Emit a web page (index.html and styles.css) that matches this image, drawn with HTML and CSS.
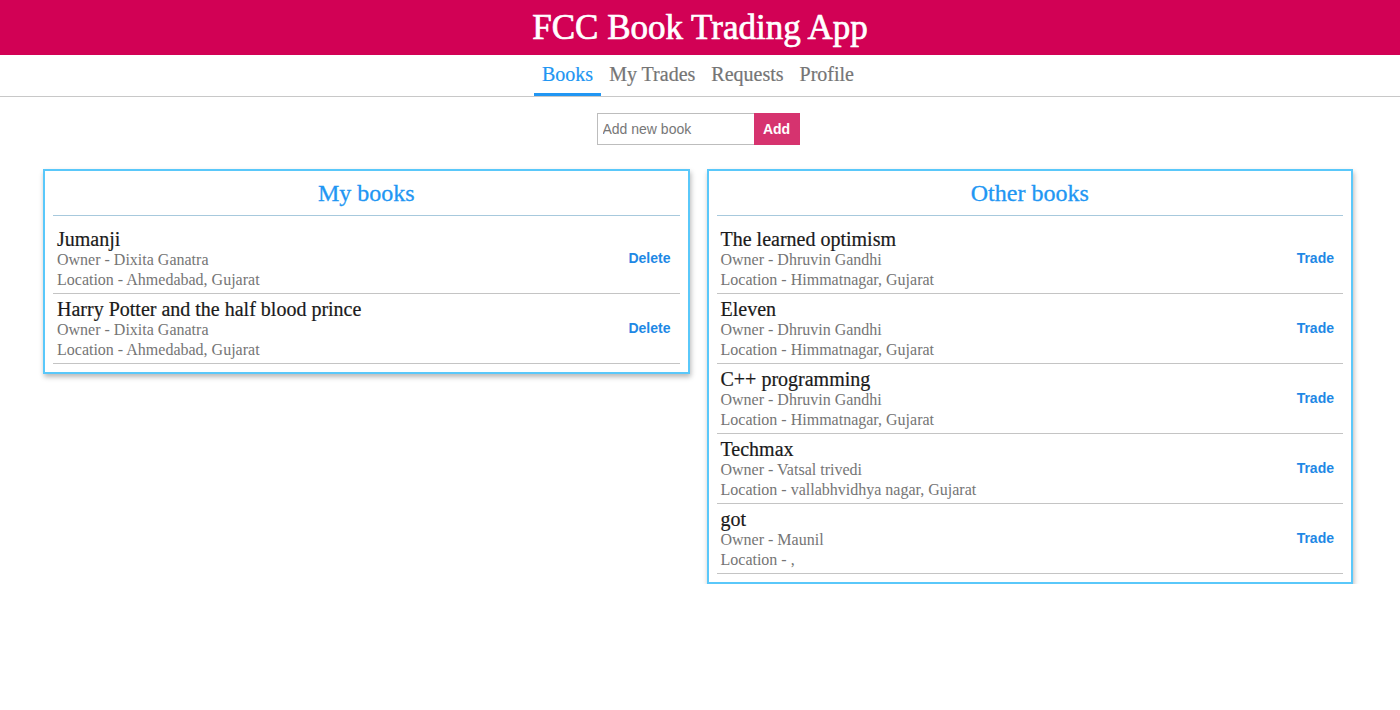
FILE: index.html
```html
<!DOCTYPE html>
<html>
<head>
<meta charset="utf-8">
<title>FCC Book Trading App</title>
<link rel="stylesheet" href="styles.css">
</head>
<body>
<header class="app-header">
  <h1 class="app-title">FCC Book Trading App</h1>
</header>
<nav class="tabs">
  <a class="tab active">Books</a>
  <a class="tab">My Trades</a>
  <a class="tab">Requests</a>
  <a class="tab">Profile</a>
</nav>
<form class="add-form">
  <input class="add-input" type="text" placeholder="Add new book">
  <button class="add-btn" type="button">Add</button>
</form>
<main class="columns">
  <section class="card">
    <h2 class="card-title">My books</h2>
    <ul class="book-list">
      <li class="book">
        <div class="book-info">
          <div class="book-name">Jumanji</div>
          <div class="book-meta">Owner - Dixita Ganatra</div>
          <div class="book-meta">Location - Ahmedabad, Gujarat</div>
        </div>
        <button class="book-action">Delete</button>
      </li>
      <li class="book">
        <div class="book-info">
          <div class="book-name">Harry Potter and the half blood prince</div>
          <div class="book-meta">Owner - Dixita Ganatra</div>
          <div class="book-meta">Location - Ahmedabad, Gujarat</div>
        </div>
        <button class="book-action">Delete</button>
      </li>
    </ul>
  </section>
  <section class="card">
    <h2 class="card-title">Other books</h2>
    <ul class="book-list">
      <li class="book">
        <div class="book-info">
          <div class="book-name">The learned optimism</div>
          <div class="book-meta">Owner - Dhruvin Gandhi</div>
          <div class="book-meta">Location - Himmatnagar, Gujarat</div>
        </div>
        <button class="book-action">Trade</button>
      </li>
      <li class="book">
        <div class="book-info">
          <div class="book-name">Eleven</div>
          <div class="book-meta">Owner - Dhruvin Gandhi</div>
          <div class="book-meta">Location - Himmatnagar, Gujarat</div>
        </div>
        <button class="book-action">Trade</button>
      </li>
      <li class="book">
        <div class="book-info">
          <div class="book-name">C++ programming</div>
          <div class="book-meta">Owner - Dhruvin Gandhi</div>
          <div class="book-meta">Location - Himmatnagar, Gujarat</div>
        </div>
        <button class="book-action">Trade</button>
      </li>
      <li class="book">
        <div class="book-info">
          <div class="book-name">Techmax</div>
          <div class="book-meta">Owner - Vatsal trivedi</div>
          <div class="book-meta">Location - vallabhvidhya nagar, Gujarat</div>
        </div>
        <button class="book-action">Trade</button>
      </li>
      <li class="book">
        <div class="book-info">
          <div class="book-name">got</div>
          <div class="book-meta">Owner - Maunil</div>
          <div class="book-meta">Location - ,</div>
        </div>
        <button class="book-action">Trade</button>
      </li>
    </ul>
  </section>
</main>
</body>
</html>
```
FILE: styles.css
```css
* { box-sizing: border-box; }
body {
  margin: 0;
  font-family: "Liberation Serif", "Times New Roman", serif;
  background: #fff;
  color: #222;
}
.app-header {
  background: #d20155;
  height: 55px;
  display: flex;
  align-items: center;
  justify-content: center;
}
.app-title {
  margin: 0;
  color: #fff;
  font-size: 35px;
  font-weight: normal;
  line-height: 53px;
  -webkit-text-stroke: 0.7px #fff;
}
.tabs {
  display: flex;
  justify-content: center;
  border-bottom: 1px solid #c8c8c8;
  height: 42px;
  padding-right: 4px;
}
.tab {
  display: flex;
  align-items: center;
  padding: 0 8px;
  font-size: 20px;
  color: #757575;
  border-bottom: 3px solid transparent;
  height: 41px;
  -webkit-text-stroke: 0.2px currentColor;
}
.tab.active {
  color: #2196f3;
  border-bottom-color: #2196f3;
}
.add-form {
  display: flex;
  justify-content: center;
  margin: 16px 4px 24px 0;
}
.add-input {
  width: 157px;
  height: 32px;
  border: 1px solid #bdbdbd;
  border-right: none;
  padding: 0 5px;
  font-family: "Liberation Sans", Arial, sans-serif;
  font-size: 14px;
  color: #333;
  outline: none;
}
.add-input::placeholder { color: #777; }
.add-btn {
  width: 46px;
  height: 32px;
  border: none;
  background: #d6336f;
  color: #fff;
  font-family: "Liberation Sans", Arial, sans-serif;
  font-weight: bold;
  font-size: 14px;
  padding: 0;
}
.columns {
  display: grid;
  grid-template-columns: 1fr 1fr;
  gap: 17px;
  padding: 0 47px 0 43px;
  align-items: start;
}
.card {
  border: 2px solid #5ac8fa;
  box-shadow: 1px 3px 5px rgba(0,0,0,0.28);
  padding: 0 8px 8px;
}
.card-title {
  margin: 0;
  height: 45px;
  border-bottom: 1px solid #a7c9dd;
  color: #2196f3;
  font-size: 24px;
  font-weight: normal;
  text-align: center;
  line-height: 44px;
  -webkit-text-stroke: 0.3px currentColor;
}
.book-list {
  list-style: none;
  margin: 0;
  padding: 8px 0 0;
}
.book {
  display: flex;
  align-items: center;
  justify-content: space-between;
  padding: 4px 4px 3px;
  border-bottom: 1px solid #c4c4c4;
}
.book-name {
  font-size: 20px;
  line-height: 22px;
  color: #1a1a1a;
  -webkit-text-stroke: 0.2px currentColor;
}
.book-meta {
  font-size: 16px;
  line-height: 20px;
  color: #757575;
}
.book-action {
  background: none;
  border: none;
  color: #1e88e5;
  font-family: "Liberation Sans", Arial, sans-serif;
  font-weight: bold;
  font-size: 14px;
  padding: 0 5px 0 6px;
  margin-top: -2px;
}
```
